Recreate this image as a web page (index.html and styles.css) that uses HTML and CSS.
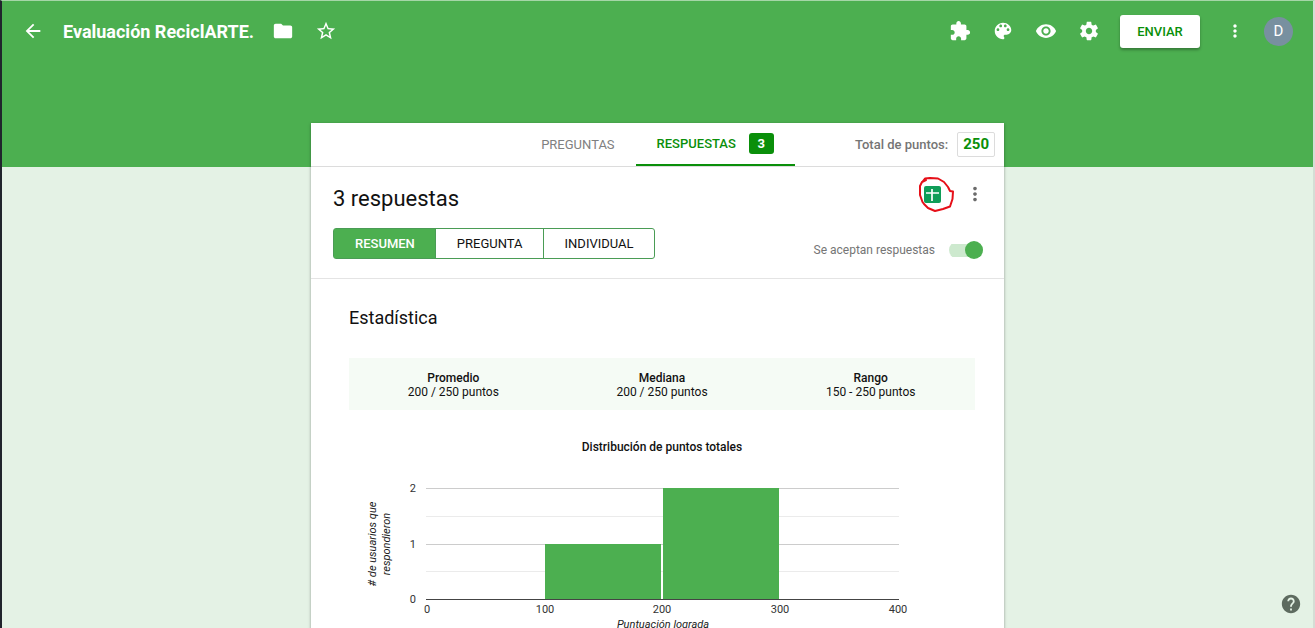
FILE: index.html
```html
<!DOCTYPE html>
<html lang="es">
<head>
<meta charset="utf-8">
<meta name="viewport" content="width=device-width, initial-scale=1">
<title>Evaluación ReciclARTE.</title>
<link rel="stylesheet" href="styles.css">
</head>
<body>
<div class="app">
  <header class="banner">
    <div class="toolbar">
      <button class="icon-btn" type="button" aria-label="Atrás"><svg class="icon" viewBox="0 0 24 24"><path d="M20 11H7.83l5.59-5.59L12 4l-8 8 8 8 1.41-1.41L7.83 13H20v-2z"/></svg></button>
      <h1 class="doc-title">Evaluación ReciclARTE.</h1>
      <div class="icon-group">
        <button class="icon-btn" type="button" aria-label="Mover a carpeta"><svg class="icon" viewBox="0 0 24 24"><path d="M10 4H4c-1.1 0-1.99.9-1.99 2L2 18c0 1.1.9 2 2 2h16c1.1 0 2-.9 2-2V8c0-1.1-.9-2-2-2h-8l-2-2z"/></svg></button>
        <button class="icon-btn" type="button" aria-label="Destacar"><svg class="icon" viewBox="0 0 24 24"><path d="M22 9.24l-7.19-.62L12 2 9.19 8.63 2 9.24l5.46 4.73L5.82 21 12 17.27 18.18 21l-1.63-7.03L22 9.24zM12 15.4l-3.76 2.27 1-4.28-3.32-2.88 4.38-.38L12 6.1l1.71 4.04 4.38.38-3.32 2.88 1 4.28L12 15.4z"/></svg></button>
      </div>
      <div class="icon-group icon-group-end">
        <button class="icon-btn" type="button" aria-label="Complementos"><svg class="icon" viewBox="0 0 24 24"><path d="M20.5 11H19V7c0-1.1-.9-2-2-2h-4V3.5C13 2.12 11.88 1 10.5 1S8 2.12 8 3.5V5H4c-1.1 0-1.99.9-1.99 2v3.8H3.5c1.49 0 2.7 1.21 2.7 2.7s-1.21 2.7-2.7 2.7H2V20c0 1.1.9 2 2 2h3.8v-1.5c0-1.49 1.21-2.7 2.7-2.7 1.49 0 2.7 1.21 2.7 2.7V22H17c1.1 0 2-.9 2-2v-4h1.5c1.38 0 2.5-1.12 2.5-2.5S21.88 11 20.5 11z"/></svg></button>
        <button class="icon-btn" type="button" aria-label="Personalizar tema"><svg class="icon" viewBox="0 0 24 24"><path d="M12 3c-4.97 0-9 4.03-9 9s4.03 9 9 9c.83 0 1.5-.67 1.5-1.5 0-.39-.15-.74-.39-1.01-.23-.26-.38-.61-.38-.99 0-.83.67-1.5 1.5-1.5H16c2.76 0 5-2.24 5-5 0-4.42-4.03-8-9-8zm-5.5 9c-.83 0-1.5-.67-1.5-1.5S5.67 9 6.5 9 8 9.67 8 10.5 7.33 12 6.5 12zm3-4C8.67 8 8 7.33 8 6.5S8.67 5 9.5 5s1.5.67 1.5 1.5S10.33 8 9.5 8zm5 0c-.83 0-1.5-.67-1.5-1.5S13.67 5 14.5 5s1.5.67 1.5 1.5S15.33 8 14.5 8zm3 4c-.83 0-1.5-.67-1.5-1.5S16.67 9 17.5 9s1.5.67 1.5 1.5-.67 1.5-1.5 1.5z"/></svg></button>
        <button class="icon-btn" type="button" aria-label="Vista previa"><svg class="icon" viewBox="0 0 24 24"><path d="M12 4.5C7 4.5 2.73 7.61 1 12c1.73 4.39 6 7.5 11 7.5s9.27-3.11 11-7.5c-1.73-4.39-6-7.5-11-7.5zM12 17c-2.76 0-5-2.24-5-5s2.24-5 5-5 5 2.24 5 5-2.24 5-5 5zm0-8c-1.66 0-3 1.34-3 3s1.34 3 3 3 3-1.34 3-3-1.34-3-3-3z"/></svg></button>
        <button class="icon-btn" type="button" aria-label="Configuración"><svg class="icon" viewBox="0 0 24 24"><path d="M19.43 12.98c.04-.32.07-.64.07-.98s-.03-.66-.07-.98l2.11-1.65c.19-.15.24-.42.12-.64l-2-3.46c-.12-.22-.39-.3-.61-.22l-2.49 1c-.52-.4-1.08-.73-1.69-.98l-.38-2.65C14.46 2.18 14.25 2 14 2h-4c-.25 0-.46.18-.49.42l-.38 2.65c-.61.25-1.17.59-1.69.98l-2.49-1c-.23-.09-.49 0-.61.22l-2 3.46c-.13.22-.07.49.12.64l2.11 1.65c-.04.32-.07.65-.07.98s.03.66.07.98l-2.11 1.65c-.19.15-.24.42-.12.64l2 3.46c.12.22.39.3.61.22l2.49-1c.52.4 1.08.73 1.69.98l.38 2.65c.03.24.24.42.49.42h4c.25 0 .46-.18.49-.42l.38-2.65c.61-.25 1.17-.59 1.69-.98l2.49 1c.23.09.49 0 .61-.22l2-3.46c.12-.22.07-.49-.12-.64l-2.11-1.65zM12 15.5c-1.93 0-3.5-1.57-3.5-3.5s1.57-3.5 3.5-3.5 3.5 1.57 3.5 3.5-1.57 3.5-3.5 3.5z"/></svg></button>
      </div>
      <button class="send" type="button">ENVIAR</button>
      <button class="icon-btn more" type="button" aria-label="Más"><svg class="icon" viewBox="0 0 24 24"><path d="M12 8c1.1 0 2-.9 2-2s-.9-2-2-2-2 .9-2 2 .9 2 2 2zm0 2c-1.1 0-2 .9-2 2s.9 2 2 2 2-.9 2-2-.9-2-2-2zm0 6c-1.1 0-2 .9-2 2s.9 2 2 2 2-.9 2-2-.9-2-2-2z"/></svg></button>
      <button class="avatar" type="button">D</button>
    </div>
  </header>

  <main class="card">
    <nav class="tab-bar">
      <div class="tabs">
        <button class="tab" type="button">PREGUNTAS</button>
        <button class="tab tab-active" type="button">RESPUESTAS <span class="badge">3</span></button>
      </div>
      <div class="total">Total de puntos: <span class="total-value">250</span></div>
    </nav>

    <section class="summary">
      <div class="summary-row">
        <h2 class="summary-title">3 respuestas</h2>
        <div class="summary-actions">
          <button class="sheet-btn" type="button" aria-label="Crear hoja de cálculo">
            <svg class="sheet-icon" viewBox="0 0 17 17"><rect width="17" height="17" rx="2" fill="#0f9d58"/><path d="M2 7h13M8 3v12" stroke="#fff" stroke-width="1.700" fill="none"/></svg>
            <svg class="mark" viewBox="0 0 36 36"><path d="M5 5L7 2.500L12 2L20 2.500L26 6L30 11L32 15L35 15.500L34.500 23L32 30.500L25 33L17 35L10 32L6 28L4.500 26L2 19L2 10L4 6L8 4" fill="none" stroke="#e60f18" stroke-width="2" stroke-linecap="round" stroke-linejoin="round"/></svg>
          </button>
          <button class="icon-btn more-dark" type="button" aria-label="Más opciones"><svg class="icon" viewBox="0 0 24 24"><path d="M12 8c1.1 0 2-.9 2-2s-.9-2-2-2-2 .9-2 2 .9 2 2 2zm0 2c-1.1 0-2 .9-2 2s.9 2 2 2 2-.9 2-2-.9-2-2-2zm0 6c-1.1 0-2 .9-2 2s.9 2 2 2 2-.9 2-2-.9-2-2-2z"/></svg></button>
        </div>
      </div>
      <div class="summary-row">
        <div class="segments">
          <button class="segment segment-active" type="button">RESUMEN</button>
          <button class="segment" type="button">PREGUNTA</button>
          <button class="segment" type="button">INDIVIDUAL</button>
        </div>
        <label class="accept">Se aceptan respuestas <input class="switch" type="checkbox" checked></label>
      </div>
    </section>

    <section class="stats">
      <h2 class="stats-title">Estadística</h2>
      <dl class="figures">
        <div class="figure"><dt>Promedio</dt><dd>200 / 250 puntos</dd></div>
        <div class="figure"><dt>Mediana</dt><dd>200 / 250 puntos</dd></div>
        <div class="figure"><dt>Rango</dt><dd>150 - 250 puntos</dd></div>
      </dl>
      <h3 class="chart-title">Distribución de puntos totales</h3>
      <svg class="chart" viewBox="0 0 626 180" role="img" aria-label="Distribución de puntos totales">
        <path class="grid-minor" d="M77 46.500H550M77 101.500H550"/>
        <path class="grid-major" d="M77 18.500H550M77 74.500H550"/>
        <rect class="bar" x="196" y="74" width="116" height="55"/>
        <rect class="bar" x="314" y="18" width="116" height="111"/>
        <path class="axis" d="M77 129.500H550"/>
        <g class="labels labels-y">
          <text x="67" y="22">2</text><text x="67" y="78">1</text><text x="67" y="133">0</text>
        </g>
        <g class="labels">
          <text x="78" y="143">0</text><text x="196" y="143">100</text><text x="313" y="143">200</text><text x="431" y="143">300</text><text x="549" y="143">400</text>
        </g>
        <g class="axis-title">
          <text x="314" y="158">Puntuación lograda</text>
          <text transform="translate(27 74) rotate(-90)">
            <tspan x="0" y="0"># de usuarios que</tspan><tspan x="0" y="14">respondieron</tspan>
          </text>
        </g>
      </svg>
    </section>
  </main>

  <button class="help" type="button" aria-label="Ayuda"><svg class="icon" viewBox="0 0 24 24"><path d="M12 2C6.480 2 2 6.480 2 12s4.480 10 10 10 10-4.480 10-10S17.520 2 12 2zm1 17h-2v-2h2v2zm2.070-7.750l-.9.920C13.450 12.900 13 13.500 13 15h-2v-.5c0-1.100.45-2.100 1.170-2.830l1.240-1.260c.37-.36.59-.86.59-1.410 0-1.100-.9-2-2-2s-2 .9-2 2H8c0-2.210 1.790-4 4-4s4 1.790 4 4c0 .88-.36 1.680-.93 2.250z"/></svg></button>
</div>
</body>
</html>
```
FILE: styles.css
```css
* { box-sizing: border-box; }

body {
  margin: 0;
  font-family: Roboto, "Liberation Sans", sans-serif;
  font-size: 13px;
  color: #111;
}

h1, h2, h3, dl, dd { margin: 0; font-weight: 400; }

button {
  font: inherit;
  color: inherit;
  background: none;
  border: 0;
  padding: 0;
  cursor: pointer;
}

.app {
  height: 100vh;
  overflow: hidden;
  background: #e4f2e5;
  border-top: 1px solid #a5d6a7;
  border-left: 2px solid #20242c;
  border-right: 2px solid #d5ddd5;
}

/* Header */
.banner {
  height: 166px;
  background: #4caf50;
  color: #fff;
}

.toolbar {
  display: flex;
  align-items: center;
  height: 60px;
  padding: 0 20px;
}

.icon-btn { display: flex; }

.icon {
  display: block;
  width: 22px;
  height: 22px;
  fill: currentColor;
}

.doc-title {
  margin: 0 18px 0 19px;
  font-size: 18px;
  font-weight: 700;
  white-space: nowrap;
}

.icon-group { display: flex; gap: 21px; }
.icon-group-end { margin-left: auto; }

.send {
  width: 80px;
  height: 33px;
  margin: 0 25px 0 20px;
  border-radius: 3px;
  background: #fff;
  color: #0a8f0a;
  font-weight: 500;
  box-shadow: 0 2px 3px rgba(0, 0, 0, .3);
}

.more { margin-right: 19px; }
.more .icon { width: 20px; }

.avatar {
  width: 29px;
  height: 29px;
  border-radius: 50%;
  background: #7890a0;
  font-size: 15px;
}

/* Card */
.card {
  width: 100%;
  max-width: 693px;
  margin: -44px auto 0;
  background: #fff;
  box-shadow: 0 1px 3px rgba(0, 0, 0, .35);
}

.tab-bar {
  display: grid;
  grid-template-columns: 1fr auto 1fr;
  height: 44px;
  border-bottom: 1px solid #dcdcdc;
}

.tabs { display: flex; grid-column: 2; }

.tab {
  display: flex;
  align-items: center;
  padding: 0 21px;
  color: #808080;
}

.tab-active {
  gap: 13px;
  color: #0a8f0a;
  font-weight: 500;
  border-bottom: 2px solid #0a8f0a;
}

.badge {
  width: 25px;
  border-radius: 3px;
  background: #0a8f0a;
  color: #fff;
  font-weight: 700;
  line-height: 21px;
}

.total {
  display: flex;
  align-items: center;
  justify-content: flex-end;
  gap: 9px;
  padding-right: 9px;
  color: #757575;
  font-weight: 500;
  white-space: nowrap;
}

.total-value {
  padding: 0 5px;
  border: 1px solid #dcdcdc;
  border-radius: 2px;
  color: #0a8f0a;
  font-size: 15px;
  font-weight: 700;
  line-height: 23px;
}

/* Responses summary */
.summary {
  display: grid;
  gap: 14px;
  padding: 16px 21px 19px 22px;
  border-bottom: 1px solid #e4e4e4;
}

.summary-row {
  display: flex;
  align-items: center;
  justify-content: space-between;
}

.summary-title { font-size: 22px; line-height: 31px; }

.summary-actions {
  display: flex;
  align-items: center;
  align-self: flex-start;
  gap: 23px;
  margin-right: -3px;
}

.sheet-btn { position: relative; }
.sheet-icon { display: block; width: 17px; height: 17px; }

.mark {
  position: absolute;
  top: -10px;
  left: -6px;
  width: 36px;
  height: 36px;
}

.more-dark { color: #6b6b6b; }

.segments {
  display: flex;
  border: 1px solid #4a9c55;
  border-radius: 3px;
}

.segment { padding: 0 20px 0 21px; line-height: 29px; }
.segment + .segment { border-left: 1px solid #4a9c55; }

.segment-active {
  background: #4caf50;
  color: #fff;
  font-weight: 500;
}

.accept {
  display: flex;
  align-items: center;
  align-self: flex-end;
  gap: 14px;
  color: #757575;
  font-size: 12px;
}

.switch {
  appearance: none;
  display: flex;
  align-items: center;
  justify-content: flex-end;
  width: 34px;
  height: 18px;
  margin: 0;
  border-radius: 9px;
  background: linear-gradient(#cde9ce, #cde9ce) center / 100% 13px no-repeat;
}

.switch::before {
  content: "";
  width: 18px;
  height: 18px;
  border-radius: 50%;
  background: #4caf50;
}

/* Statistics */
.stats { padding: 27px 29px 20px 38px; }
.stats-title { font-size: 18px; line-height: 24px; }

.figures {
  display: grid;
  grid-template-columns: repeat(3, 1fr);
  margin-top: 28px;
  padding: 13px 0 11px;
  background: #f5fbf5;
  font-size: 12px;
  line-height: 14px;
  text-align: center;
}

.figure dt { font-weight: 500; }

.chart-title {
  margin-top: 29px;
  font-size: 12px;
  font-weight: 500;
  line-height: 16px;
  text-align: center;
}

.chart { display: block; width: 100%; margin-top: 15px; }
.grid-minor { stroke: #ebebeb; }
.grid-major { stroke: #ccc; }
.axis { stroke: #444; }
.bar { fill: #4caf50; }

.labels { font-size: 11px; fill: #333; text-anchor: middle; }
.labels-y { text-anchor: end; }

.axis-title {
  font-size: 11px;
  font-style: italic;
  fill: #222;
  text-anchor: middle;
}

.help {
  position: fixed;
  right: 13px;
  bottom: 13px;
  color: #5d6b5f;
}
```
